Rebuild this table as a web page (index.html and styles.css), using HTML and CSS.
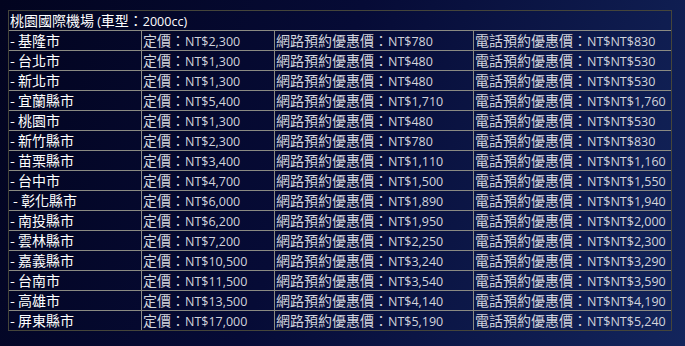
FILE: index.html
```html
<!DOCTYPE html>
<html>

<head lang="zh-Hant">
    <meta charset="UTF-8">
    <title>桃園國際機場</title>
    <link rel="stylesheet" href="styles.css">
</head>

<body>
    <table class="fares">
        <colgroup>
            <col class="col-city">
            <col class="col-price">
            <col class="col-web">
            <col class="col-phone">
        </colgroup>
        <tr>
            <td class="title" colspan="4">桃園國際機場 <span class="en">(</span>車型：<span class="en">2000cc)</span></td>
        </tr>
        <tr><td class="city">- 基隆市</td><td>定價：<span class="en">NT$2,300</span></td><td>網路預約優惠價：<span class="en">NT$780</span></td><td>電話預約優惠價：<span class="en">NT$NT$830</span></td></tr>
        <tr><td class="city">- 台北市</td><td>定價：<span class="en">NT$1,300</span></td><td>網路預約優惠價：<span class="en">NT$480</span></td><td>電話預約優惠價：<span class="en">NT$NT$530</span></td></tr>
        <tr><td class="city">- 新北市</td><td>定價：<span class="en">NT$1,300</span></td><td>網路預約優惠價：<span class="en">NT$480</span></td><td>電話預約優惠價：<span class="en">NT$NT$530</span></td></tr>
        <tr><td class="city">- 宜蘭縣市</td><td>定價：<span class="en">NT$5,400</span></td><td>網路預約優惠價：<span class="en">NT$1,710</span></td><td>電話預約優惠價：<span class="en">NT$NT$1,760</span></td></tr>
        <tr><td class="city">- 桃園市</td><td>定價：<span class="en">NT$1,300</span></td><td>網路預約優惠價：<span class="en">NT$480</span></td><td>電話預約優惠價：<span class="en">NT$NT$530</span></td></tr>
        <tr><td class="city">- 新竹縣市</td><td>定價：<span class="en">NT$2,300</span></td><td>網路預約優惠價：<span class="en">NT$780</span></td><td>電話預約優惠價：<span class="en">NT$NT$830</span></td></tr>
        <tr><td class="city">- 苗栗縣市</td><td>定價：<span class="en">NT$3,400</span></td><td>網路預約優惠價：<span class="en">NT$1,110</span></td><td>電話預約優惠價：<span class="en">NT$NT$1,160</span></td></tr>
        <tr><td class="city">- 台中市</td><td>定價：<span class="en">NT$4,700</span></td><td>網路預約優惠價：<span class="en">NT$1,500</span></td><td>電話預約優惠價：<span class="en">NT$NT$1,550</span></td></tr>
        <tr><td class="city indent">- 彰化縣市</td><td>定價：<span class="en">NT$6,000</span></td><td>網路預約優惠價：<span class="en">NT$1,890</span></td><td>電話預約優惠價：<span class="en">NT$NT$1,940</span></td></tr>
        <tr><td class="city">- 南投縣市</td><td>定價：<span class="en">NT$6,200</span></td><td>網路預約優惠價：<span class="en">NT$1,950</span></td><td>電話預約優惠價：<span class="en">NT$NT$2,000</span></td></tr>
        <tr><td class="city">- 雲林縣市</td><td>定價：<span class="en">NT$7,200</span></td><td>網路預約優惠價：<span class="en">NT$2,250</span></td><td>電話預約優惠價：<span class="en">NT$NT$2,300</span></td></tr>
        <tr><td class="city">- 嘉義縣市</td><td>定價：<span class="en">NT$10,500</span></td><td>網路預約優惠價：<span class="en">NT$3,240</span></td><td>電話預約優惠價：<span class="en">NT$NT$3,290</span></td></tr>
        <tr><td class="city">- 台南市</td><td>定價：<span class="en">NT$11,500</span></td><td>網路預約優惠價：<span class="en">NT$3,540</span></td><td>電話預約優惠價：<span class="en">NT$NT$3,590</span></td></tr>
        <tr><td class="city">- 高雄市</td><td>定價：<span class="en">NT$13,500</span></td><td>網路預約優惠價：<span class="en">NT$4,140</span></td><td>電話預約優惠價：<span class="en">NT$NT$4,190</span></td></tr>
        <tr><td class="city">- 屏東縣市</td><td>定價：<span class="en">NT$17,000</span></td><td>網路預約優惠價：<span class="en">NT$5,190</span></td><td>電話預約優惠價：<span class="en">NT$NT$5,240</span></td></tr>
    </table>
</body>

</html>
```

FILE: styles.css
```css
html {
    height: 100%;
}

body {
    margin: 0;
    padding: 10px 8px;
    min-height: 100%;
    box-sizing: border-box;
    background: linear-gradient(110deg, #02041f 0%, #060b36 45%, #13255c 100%);
    font-family: "Noto Sans CJK TC", "Noto Sans", sans-serif;
    font-size: 14px;
    color: #d2d4dc;
}

.fares {
    width: 664px;
    border-spacing: 0;
    border: 1px solid #45453a;
    table-layout: fixed;
}

.col-city {
    width: 132px;
}

.col-price {
    width: 133px;
}

.col-web {
    width: 199px;
}

.col-phone {
    width: 198px;
}

.fares td {
    height: 19px;
    padding: 0 1px;
    line-height: 19px;
    white-space: nowrap;
    overflow: hidden;
    border-top: 1px solid #8a8a82;
    border-left: 1px solid #8a8a82;
}

.fares td:first-child {
    border-left: none;
}

.fares tr:first-child td {
    border-top: none;
}

.fares .title,
.fares .city {
    color: #ffffff;
}

.fares .indent {
    padding-left: 4px;
}

/* latin part of the text is drawn narrower, like the original font */
.en {
    font-family: "Open Sans", "Noto Sans", sans-serif;
    font-size: 12.5px;
    line-height: 1;
}
```
